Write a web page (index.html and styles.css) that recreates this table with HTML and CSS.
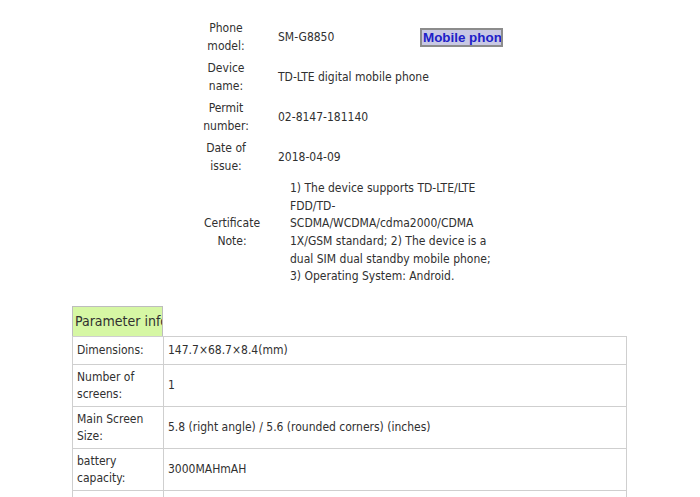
FILE: index.html
```html
<!DOCTYPE html>
<html>
<head>
<meta charset="utf-8">
<link rel="stylesheet" href="styles.css">
</head>
<body>
<div class="page">
  <div class="info">
    <div class="row">
      <div class="lbl">Phone<br>model:</div>
      <div class="val val-first"><span>SM-G8850</span><span class="badge">Mobile phone</span></div>
    </div>
    <div class="row">
      <div class="lbl">Device<br>name:</div>
      <div class="val">TD-LTE digital mobile phone</div>
    </div>
    <div class="row">
      <div class="lbl">Permit<br>number:</div>
      <div class="val">02-8147-181140</div>
    </div>
    <div class="row">
      <div class="lbl">Date of<br>issue:</div>
      <div class="val">2018-04-09</div>
    </div>
    <div class="row row-note">
      <div class="lbl">Certificate<br>Note:</div>
      <div class="val">1) The device supports TD-LTE/LTE FDD/TD-SCDMA/WCDMA/cdma2000/CDMA 1X/GSM standard; 2) The device is a dual SIM dual standby mobile phone; 3) Operating System: Android.</div>
    </div>
  </div>

  <div class="params">
    <div class="ph">Parameter information</div>
    <table class="ptable">
      <tr><td class="pl">Dimensions:</td><td class="pv">147.7×68.7×8.4(mm)</td></tr>
      <tr><td class="pl">Number of<br>screens:</td><td class="pv">1</td></tr>
      <tr><td class="pl">Main Screen<br>Size:</td><td class="pv">5.8 (right angle) / 5.6 (rounded corners) (inches)</td></tr>
      <tr><td class="pl">battery<br>capacity:</td><td class="pv">3000MAHmAH</td></tr>
      <tr class="empty"><td class="pl"></td><td class="pv"></td></tr>
    </table>
  </div>
</div>
</body>
</html>
```
FILE: styles.css
```css
html, body {
  margin: 0;
  padding: 0;
  background: #ffffff;
}
body {
  font-family: "DejaVu Sans Condensed", "DejaVu Sans", sans-serif;
  font-stretch: condensed;
  font-size: 12px;
  color: #303030;
}
.page {
  padding-top: 18px;
}
.info {
  margin-left: 188px;
}
.row {
  display: grid;
  grid-template-columns: 76px 225px;
  column-gap: 14px;
  align-items: center;
  padding: 2.4px 0;
  line-height: 17.6px;
}
.row-note {
  grid-template-columns: 88px 215px;
}
.lbl {
  text-align: center;
}
.val-first {
  display: flex;
  justify-content: space-between;
  align-items: center;
}
.badge {
  box-sizing: border-box;
  width: 83px;
  height: 19px;
  border: 2px solid #8c8c8c;
  background: #c8c8e4;
  color: #2020c8;
  font-family: "Liberation Sans", Arial, sans-serif;
  font-stretch: normal;
  font-weight: bold;
  font-size: 13.4px;
  line-height: 15px;
  padding-left: 1px;
  white-space: nowrap;
  overflow: hidden;
}
.params {
  margin-top: 18px;
  margin-left: 72px;
  width: 555px;
}
.ph {
  box-sizing: border-box;
  width: 91px;
  height: 30px;
  border: 1px solid #bdbdbd;
  border-bottom: none;
  background: #d6f7a4;
  font-size: 14px;
  line-height: 28px;
  padding-left: 2px;
  white-space: nowrap;
  overflow: hidden;
}
.ptable {
  width: 555px;
  border-collapse: collapse;
  border: 1px solid #c8c8c8;
}
.ptable td {
  border: 1px solid #cfcfcf;
  padding: 4px 4px;
  line-height: 16.5px;
  vertical-align: middle;
}
.ptable tr:first-child td {
  padding-top: 5.2px;
  padding-bottom: 5.2px;
}
.ptable .empty td {
  height: 30px;
}
.pl {
  width: 82px;
}
```
